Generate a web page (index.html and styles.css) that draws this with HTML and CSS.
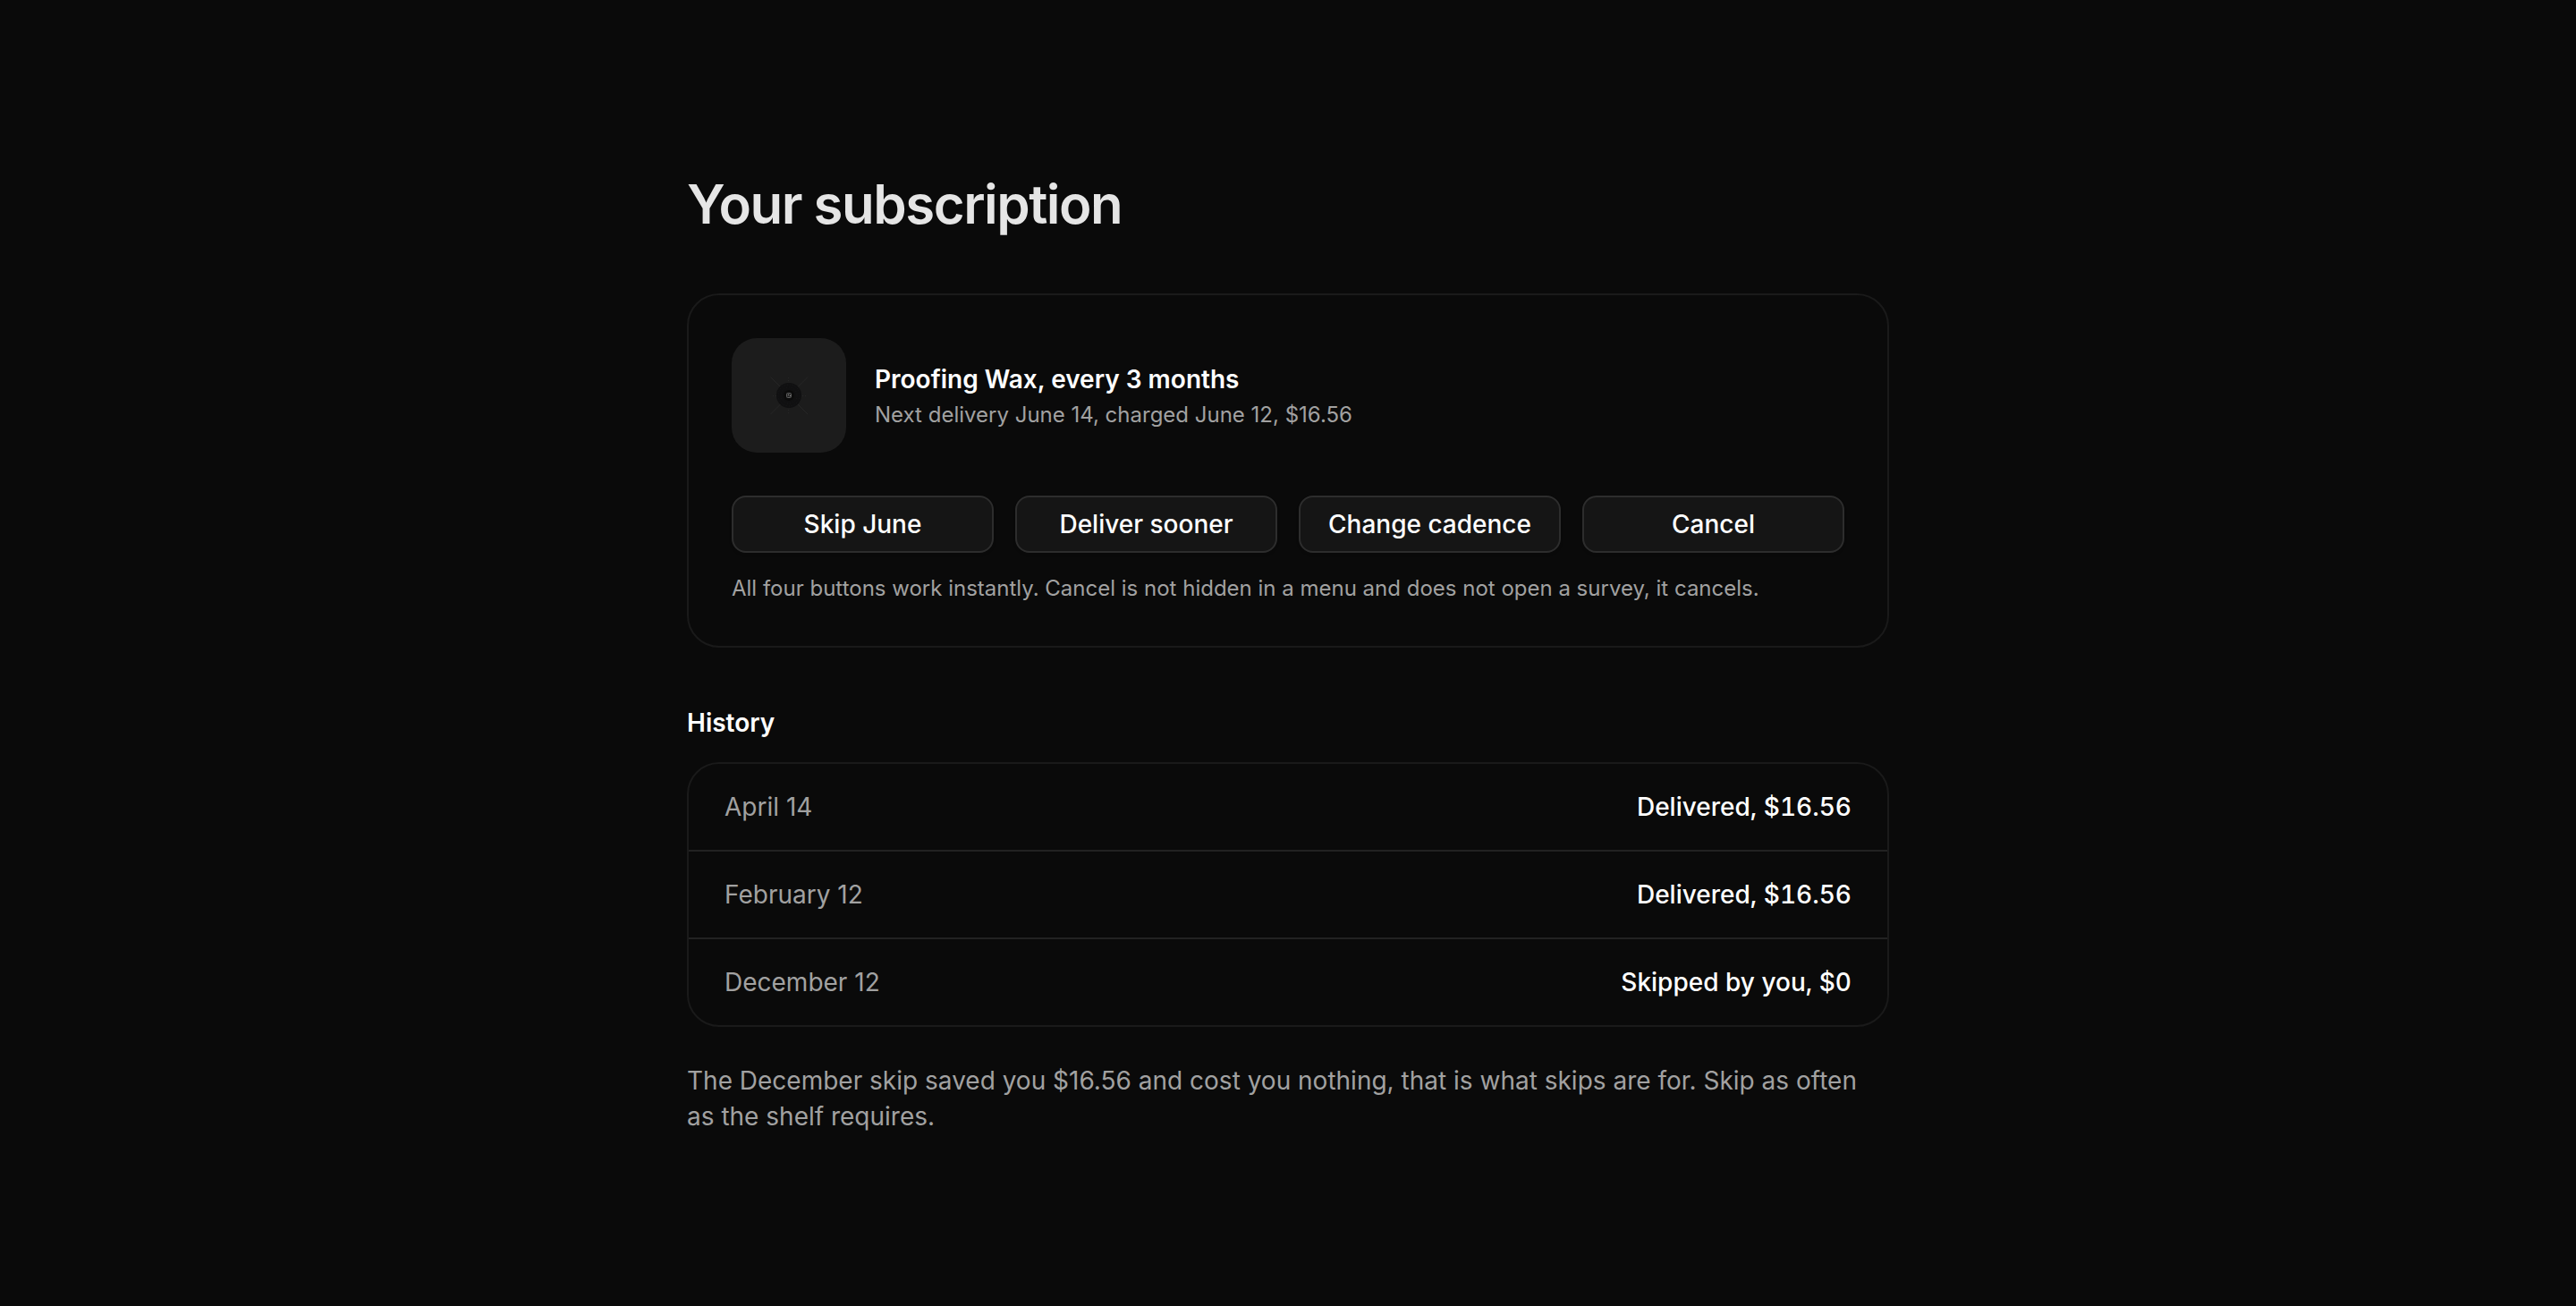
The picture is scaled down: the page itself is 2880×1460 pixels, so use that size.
FILE: index.html
```html
<!DOCTYPE html>
<html lang="en">
<head>
<meta charset="utf-8">
<meta name="viewport" content="width=device-width, initial-scale=1">
<title>Your subscription</title>
<link rel="stylesheet" href="styles.css">
</head>
<body>
<main class="page">
  <h1 class="page-title">Your subscription</h1>

  <section class="card plan">
    <div class="plan-summary">
      <svg class="plan-thumb" viewBox="0 0 128 128" aria-hidden="true">
        <rect width="128" height="128" fill="#1c1c1c"/>
        <g fill="none" stroke="#262626" stroke-width="1">
          <path d="M43.500 43.500L85 85M85 43.500L43.500 85"/>
          <path d="M63.500 44v40M46 64.500h38" stroke-dasharray="1 2"/>
        </g>
        <circle cx="64" cy="64" r="14" fill="#101011"/>
        <g fill="none" stroke="#18181a" stroke-dasharray="1 2">
          <circle cx="64" cy="64" r="12"/>
          <circle cx="64" cy="64" r="9"/>
        </g>
        <circle cx="64" cy="64" r="6" fill="#0b0b0b"/>
        <rect x="61.500" y="61.500" width="5" height="5" rx="1" fill="#2a2a2a" stroke="#5c5c5c"/>
        <path d="M63 63h1v1h-1zM65 64h1v1h-1z" fill="#858585"/>
      </svg>
      <div class="plan-text">
        <h2 class="heading">Proofing Wax, every 3 months</h2>
        <p class="small">Next delivery June 14, charged June 12, $16.56</p>
      </div>
    </div>
    <div class="actions">
      <button class="button" type="button">Skip June</button>
      <button class="button" type="button">Deliver sooner</button>
      <button class="button" type="button">Change cadence</button>
      <button class="button" type="button">Cancel</button>
    </div>
    <p class="small plan-note">All four buttons work instantly. Cancel is not hidden in a menu and does not open a survey, it cancels.</p>
  </section>

  <section class="history">
    <h2 class="heading" id="history-title">History</h2>
    <div class="card">
      <table class="history-table" aria-labelledby="history-title">
        <tbody>
          <tr><th scope="row">April 14</th><td>Delivered, $16.56</td></tr>
          <tr><th scope="row">February 12</th><td>Delivered, $16.56</td></tr>
          <tr><th scope="row">December 12</th><td>Skipped by you, $0</td></tr>
        </tbody>
      </table>
    </div>
  </section>

  <p class="footnote">The December skip saved you $16.56 and cost you nothing, that is what skips are for. Skip as often as the shelf requires.</p>
</main>
</body>
</html>
```
FILE: styles.css
```css
:root {
  --bg: #0a0a0a;
  --line: #1a1a1a;
  --divider: #222222;
  --text: #ffffff;
  --muted: #a1a1a1;
}

*,
*::before,
*::after {
  box-sizing: border-box;
}

body {
  margin: 0;
  background: var(--bg);
  color: var(--text);
  font-family: Inter, "Liberation Sans", sans-serif;
  font-size: 28px;
  line-height: 40px;
}

h1,
h2,
p {
  margin: 0;
}

.page {
  max-width: 1408px;
  margin: 0 auto;
  padding: 192px 32px;
}

.page-title {
  margin-bottom: 64px;
  background: #e5e5e5;
  background-clip: text;
  color: transparent;
  font-size: 60px;
  font-weight: 600;
  line-height: 72px;
  letter-spacing: -0.025em;
}

.card {
  border: 2px solid var(--line);
  border-radius: 36px;
}

.heading {
  font-size: 28px;
  font-weight: 600;
  line-height: 40px;
}

.small {
  color: var(--muted);
  font-size: 24px;
  line-height: 32px;
}

.plan {
  padding: 48px;
}

.plan-summary {
  display: flex;
  align-items: center;
  gap: 32px;
}

.plan-thumb {
  flex: none;
  width: 128px;
  height: 128px;
  border-radius: 28px;
}

.plan-text {
  display: grid;
  gap: 4px;
}

.actions {
  display: grid;
  grid-template-columns: repeat(4, 1fr);
  gap: 24px;
  margin-top: 48px;
}

.button {
  height: 64px;
  padding: 0 20px;
  border: 2px solid #2d2d2d;
  border-radius: 16px;
  background: #151515;
  box-shadow: 0 2px 4px rgb(0 0 0 / 0.05);
  color: var(--text);
  font: inherit;
  font-weight: 500;
  cursor: pointer;
}

.plan-note {
  margin-top: 24px;
}

.history {
  display: grid;
  gap: 24px;
  margin-top: 64px;
}

.history-table {
  width: 100%;
  border-spacing: 0;
}

.history-table th,
.history-table td {
  padding: 28px 40px;
}

.history-table tr + tr > * {
  border-top: 2px solid var(--divider);
}

.history-table th {
  color: var(--muted);
  font-weight: 400;
  text-align: left;
}

.history-table td {
  font-weight: 500;
  font-variant-numeric: tabular-nums;
  text-align: right;
}

.footnote {
  margin-top: 40px;
  color: var(--muted);
}
```
